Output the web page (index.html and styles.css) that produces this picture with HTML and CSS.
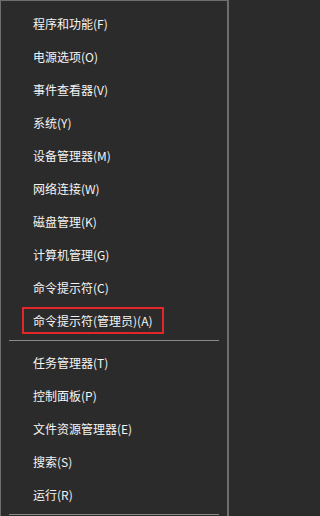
FILE: index.html
```html
<!DOCTYPE html>
<html lang="zh-CN">
<head>
<meta charset="utf-8">
<title>Win+X</title>
<link rel="stylesheet" href="styles.css">
</head>
<body>
<div class="menu">
  <div class="item"><span class="label">程序和功能(F)</span></div>
  <div class="item"><span class="label">电源选项(O)</span></div>
  <div class="item"><span class="label">事件查看器(V)</span></div>
  <div class="item"><span class="label">系统(Y)</span></div>
  <div class="item"><span class="label">设备管理器(M)</span></div>
  <div class="item"><span class="label">网络连接(W)</span></div>
  <div class="item"><span class="label">磁盘管理(K)</span></div>
  <div class="item"><span class="label">计算机管理(G)</span></div>
  <div class="item"><span class="label">命令提示符(C)</span></div>
  <div class="item"><span class="label boxed">命令提示符(管理员)(A)</span></div>
  <div class="sep"></div>
  <div class="item"><span class="label">任务管理器(T)</span></div>
  <div class="item"><span class="label">控制面板(P)</span></div>
  <div class="item"><span class="label">文件资源管理器(E)</span></div>
  <div class="item"><span class="label">搜索(S)</span></div>
  <div class="item"><span class="label">运行(R)</span></div>
  <div class="sep"></div>
</div>
</body>
</html>
```
FILE: styles.css
```css
html, body {
  margin: 0;
  padding: 0;
  background: #2b2b2b;
}
body {
  width: 229px;
  height: 516px;
  overflow: hidden;
  font-family: "Noto Sans CJK SC", "Microsoft YaHei", "Noto Sans", sans-serif;
  font-size: 12px;
  color: #f4f4f4;
}
.menu {
  box-sizing: border-box;
  width: 229px;
  height: 516px;
  background: #2b2b2b;
  border-left: 1px solid #6e6e6e;
  border-top: 1px solid #6e6e6e;
  border-right: 2px solid #6e6e6e;
  padding-top: 6px;
  display: flex;
  flex-direction: column;
}
.item {
  height: 33px;
  display: flex;
  align-items: center;
  padding-left: 32px;
  flex: none;
}
.label {
  line-height: 16px;
  white-space: nowrap;
}
.boxed {
  box-sizing: border-box;
  height: 27px;
  display: inline-flex;
  align-items: center;
  border: 2px solid #e3262a;
  padding: 0 9px;
  margin-left: -11px;
}
.sep {
  flex: none;
  height: 1px;
  background: #8a8a8a;
  margin: 3px 8px 5px 8px;
}
```
